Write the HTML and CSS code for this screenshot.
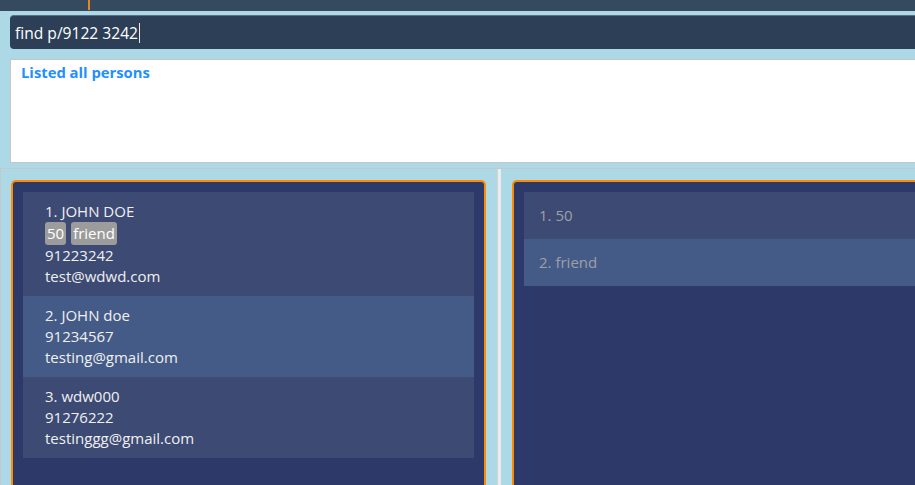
FILE: index.html
```html
<!DOCTYPE html>
<html>
<head>
<meta charset="utf-8">
<link rel="stylesheet" href="styles.css">
</head>
<body>
<div class="menubar"><span class="menu-mark"></span></div>
<div class="command"><span class="command-text">find p/9122 3242</span><span class="caret"></span></div>
<div class="result"><span class="result-text">Listed all persons</span></div>
<div class="split">
  <div class="pane pane-left">
    <div class="panel">
      <div class="list">
        <div class="cell odd">
          <div class="line">1. JOHN DOE</div>
          <div class="tags"><span class="tag">50</span><span class="tag">friend</span></div>
          <div class="line">91223242</div>
          <div class="line">test@wdwd.com</div>
        </div>
        <div class="cell even">
          <div class="line">2. JOHN doe</div>
          <div class="line">91234567</div>
          <div class="line">testing@gmail.com</div>
        </div>
        <div class="cell odd">
          <div class="line">3. wdw000</div>
          <div class="line">91276222</div>
          <div class="line">testinggg@gmail.com</div>
        </div>
      </div>
    </div>
  </div>
  <div class="divider"></div>
  <div class="pane pane-right">
    <div class="panel">
      <div class="list">
        <div class="tcell odd">1. 50</div>
        <div class="tcell even">2. friend</div>
      </div>
    </div>
  </div>
</div>
</body>
</html>
```
FILE: styles.css
```css
* { box-sizing: border-box; }
html, body { margin: 0; padding: 0; }
body {
  width: 915px;
  height: 485px;
  overflow: hidden;
  background: #add8e6;
  font-family: "Open Sans", "Noto Sans", sans-serif;
  font-size: 15px;
}
.menubar {
  height: 11px;
  background: #364a5f;
  display: flex;
}
.menu-mark {
  margin-left: 88px;
  width: 2px;
  height: 10px;
  background: #e08a1e;
}
.command {
  margin: 4px 0 0 10px;
  height: 34px;
  background: #2c3f57;
  border-radius: 4px 0 0 4px;
  border-top: 1px solid #5a7088;
  display: flex;
  align-items: center;
  padding-left: 5px;
  color: #ffffff;
  font-size: 15.6px;
}
.caret {
  width: 1px;
  height: 20px;
  background: #e8e8e8;
  margin-left: 1px;
}
.result {
  margin: 10px 0 0 10px;
  height: 104px;
  background: #ffffff;
  border: 1px solid #c6c6c6;
  border-right: none;
  padding: 1px 0 0 10px;
  line-height: 22px;
}
.result-text {
  color: #1e90ff;
  font-weight: bold;
  font-size: 14.8px;
}
.split {
  margin-top: 5px;
  border-top: 1px solid #c4c8cc;
  border-left: 1px solid #c4c8cc;
  display: flex;
  height: 320px;
}
.pane-left {
  width: 496px;
  padding: 11px 11px 0 10px;
}
.divider {
  width: 4px;
  background: #ececec;
  border-left: 1px solid #d4d4d4;
}
.pane-right {
  flex: 1;
  padding: 11px 0 0 11px;
}
.panel {
  height: 100%;
  background: #2d3968;
  border: 2px solid #ff8c00;
  border-bottom: none;
  border-radius: 5px 5px 0 0;
  padding: 10px 10px 0 10px;
}
.pane-right .panel {
  border-right: none;
  border-radius: 5px 0 0 0;
  padding-right: 0;
}
.odd { background: #3c4a74; }
.even { background: #445b87; }
.cell {
  padding: 9px 0 9px 22px;
  color: #f0f0f0;
}
.line {
  height: 21px;
  line-height: 21px;
}
.tags {
  display: flex;
  gap: 5px;
  height: 23px;
}
.tag {
  background: #9c9c9c;
  color: #ffffff;
  border-radius: 3px;
  padding: 0 2px;
  line-height: 23px;
}
.tcell {
  height: 47px;
  line-height: 47px;
  padding-left: 15px;
  color: #9da0a8;
}
```
